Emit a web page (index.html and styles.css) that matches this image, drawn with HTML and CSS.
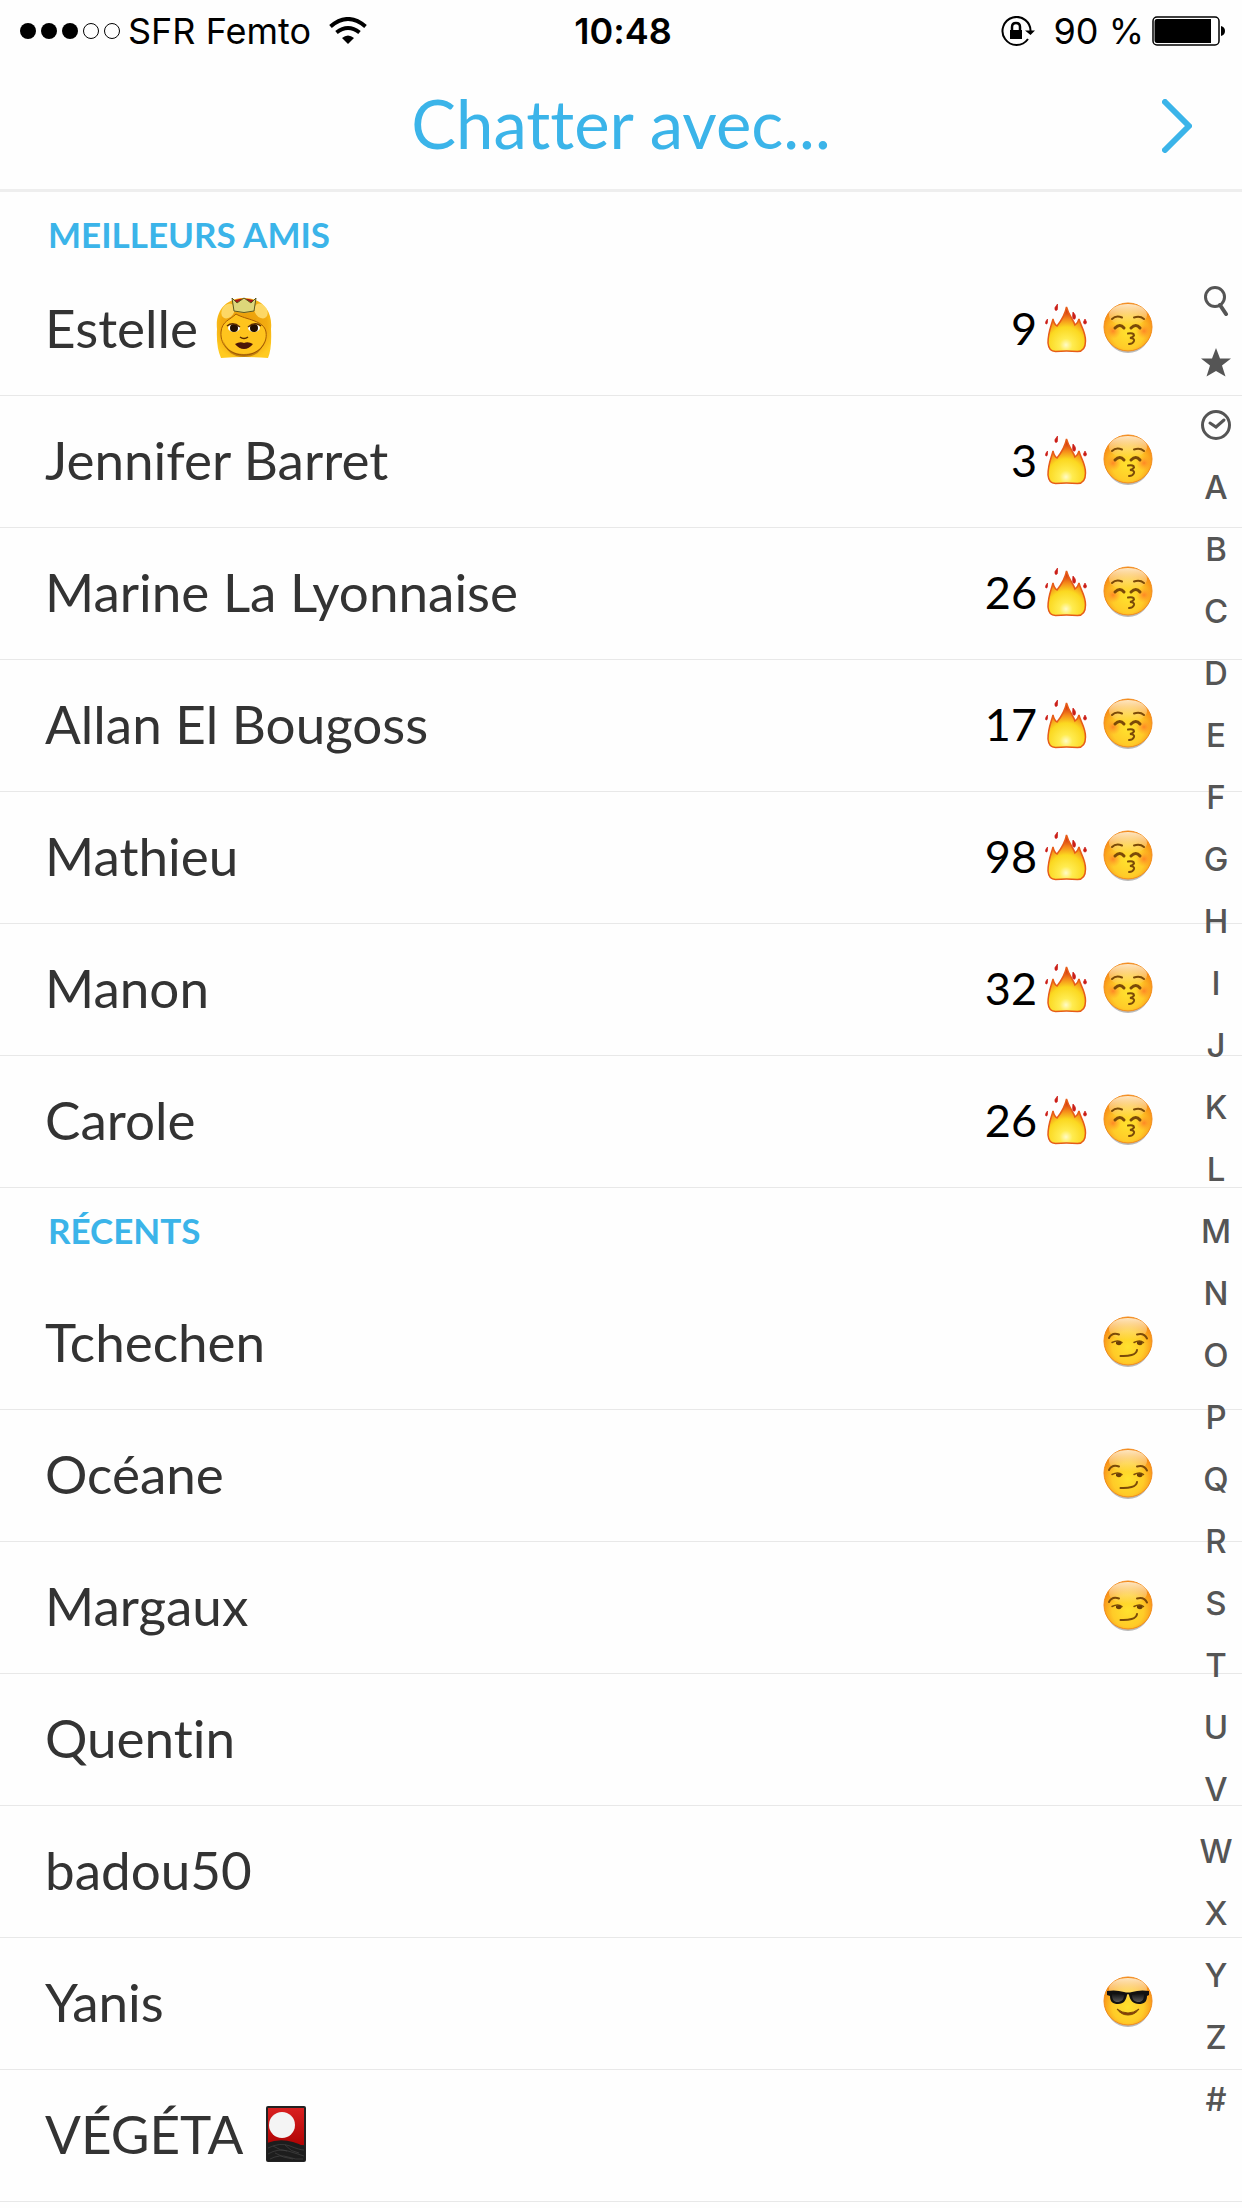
FILE: index.html
```html
<!DOCTYPE html>
<html lang="fr">
<head>
  <meta charset="UTF-8">
  <meta name="viewport" content="width=device-width">
  <title>Chatter avec…</title>
  <link rel="stylesheet" href="styles.css">
</head>
<body>
  <!-- shared emoji -->
  <svg class="defs" width="0" height="0" aria-hidden="true">
    <defs>
      <radialGradient id="face-fill" cx="50%" cy="62%" r="60%">
        <stop offset="0" stop-color="#ffe22e"/>
        <stop offset=".55" stop-color="#ffcb28"/>
        <stop offset="1" stop-color="#f78212"/>
      </radialGradient>
      <linearGradient id="face-shine" x1="0" y1="0" x2="0" y2="1">
        <stop offset="0" stop-color="#fff8e0" stop-opacity=".85"/>
        <stop offset="1" stop-color="#fff3c0" stop-opacity="0"/>
      </linearGradient>
      <radialGradient id="blush">
        <stop offset="0" stop-color="#ff7b25" stop-opacity=".85"/>
        <stop offset="1" stop-color="#ff9a25" stop-opacity="0"/>
      </radialGradient>
      <radialGradient id="flame-fill" gradientUnits="userSpaceOnUse" cx="21" cy="42" r="36">
        <stop offset="0" stop-color="#fffbc8"/>
        <stop offset=".18" stop-color="#ffec50"/>
        <stop offset=".5" stop-color="#fbd820"/>
        <stop offset=".72" stop-color="#f58a1a"/>
        <stop offset="1" stop-color="#cf240e"/>
      </radialGradient>
      <radialGradient id="hair-fill" cx="50%" cy="45%" r="60%">
        <stop offset="0" stop-color="#e79a08"/>
        <stop offset=".7" stop-color="#f3ac10"/>
        <stop offset="1" stop-color="#ffca20"/>
      </radialGradient>
      <linearGradient id="card-fill" x1="0" y1="0" x2="0" y2="1">
        <stop offset="0" stop-color="#d92020"/>
        <stop offset="1" stop-color="#b00404"/>
      </linearGradient>
      <linearGradient id="lens" x1="0" y1="0" x2="0" y2="1">
        <stop offset="0" stop-color="#111"/>
        <stop offset="1" stop-color="#5a5a5a"/>
      </linearGradient>

      <symbol id="face" viewBox="0 0 50 52">
        <ellipse cx="25" cy="27" rx="23" ry="24" fill="#777" opacity=".5"/>
        <circle cx="25" cy="25" r="24" fill="url(#face-fill)" stroke="#f28c1c"/>
        <ellipse cx="25" cy="13" rx="19" ry="11" fill="url(#face-shine)"/>
      </symbol>

      <symbol id="kiss" viewBox="0 0 50 52">
        <use href="#face"/>
        <circle cx="10" cy="29" r="8" fill="url(#blush)"/>
        <circle cx="41" cy="29" r="8" fill="url(#blush)"/>
        <g fill="none" stroke="#7b4a08" stroke-linecap="round" stroke-width="2">
          <path d="M9 17q4-4 10-1.500M31 15.500q6-2 10 1.500"/>
          <path d="M12 26q5-5 9 0M28 26q5-5 9 0" stroke-width="3"/>
          <path d="M25 31.500q6-1 6 2-1 2-4 2.500 5 .5 4 3-1 3-5 3"/>
        </g>
      </symbol>

      <symbol id="smirk" viewBox="0 0 50 52">
        <use href="#face"/>
        <g fill="none" stroke="#7b4a08" stroke-linecap="round" stroke-width="2">
          <path d="M6 22q3-6 10-3.500M34 18.500q7-2 10 4"/>
          <path d="M9 26.500q6-3 10 0M31 26.500q6-3 9.500 0" stroke-width="1.500"/>
          <path d="M17.500 40c8 .5 16-1 16.500-6" stroke-width="2"/>
        </g>
        <path d="M13 26q4-2 6 1-2 4-6 1zM34 26q4-2 6 1-2 4-6 1z" fill="#6b3f08"/>
      </symbol>

      <symbol id="cool" viewBox="0 0 50 52">
        <use href="#face"/>
        <path d="M14 33q11 8 22 0-4 6-11 6t-11-6z" fill="#8a3c08" stroke="#7b4a08" stroke-linejoin="round"/>
        <path d="M4 15q9-1.500 17 1 4 1 8 0 8-2.500 17-1v4l-2 1c0 6-3 8-8 8-6 0-9-4-10-9q-1-2-2 0c-1 5-3 9-9 9-5 0-8-2-8-8l-3-1z" fill="#111"/>
        <path d="M9 18q6-1 12 1c0 5-3 7-6.500 7S9 24 9 18zM29 19q6-2 12-1c0 6-2 8-5.500 8S29 24 29 19z" fill="url(#lens)"/>
      </symbol>

      <symbol id="fire" viewBox="0 0 42 50">
        <path d="M3 40C3 29 6 24 8 16q1 5 4 7C16 18 20 12 21.500 4 24 13 28 16 30 22q3-2 4-6c2 8 6.500 12 6.500 22 0 7-3 10.500-8 10.500q-11-1-22 0C6 48.500 3.500 46 3 40z" fill="url(#flame-fill)" stroke="#e65c18" stroke-width="1.500"/>
        <path d="M12.500 1v4.500q0 2-1.500 2t-1-3zM28 9q3 3 2.500 5.500t-2 1.500q-1.500-1-.5-7zM2.500 16v3.500q-.5 2-1.500 1.500T1 18zM40 16l1.500 3q0 2-1.500 2t-1.500-2z" fill="#cb1e17" stroke="#cb1e17" stroke-width=".7"/>
      </symbol>
    </defs>
  </svg>

  <div class="status-bar">
    <div class="status-left">
      <svg class="signal" viewBox="0 0 100 16" aria-hidden="true">
        <circle cx="8" cy="8" r="8"/><circle cx="29" cy="8" r="8"/><circle cx="50" cy="8" r="8"/>
        <g fill="none" stroke="#000"><circle cx="71" cy="8" r="7.500"/><circle cx="92" cy="8" r="7.500"/></g>
      </svg>
      <span>SFR Femto</span>
      <svg class="wifi" viewBox="0 0 38 28" aria-hidden="true">
        <path d="M19 27l-6-6q6-5 12 0z"/>
        <g fill="none" stroke="#000" stroke-width="4"><path d="M1.500 9.500q17.500-15 35 0"/><path d="M7.500 15.500q11.500-9 23 0"/></g>
      </svg>
    </div>
    <div class="clock">10:48</div>
    <div class="status-right">
      <svg class="lock" viewBox="0 0 34 30" aria-hidden="true">
        <g fill="none" stroke="#000" stroke-width="2">
          <path d="M29.500 16A14 14 0 1 0 27 23"/>
          <path d="M11 15v-4q0-4 4-4t4 4v4" stroke-width="2.500"/>
        </g>
        <path d="M9 14h12v9H9zM24 14.500h10L29.500 19z"/>
      </svg>
      <span>90 %</span>
      <svg class="battery" viewBox="0 0 74 30" aria-hidden="true">
        <rect x="1" y="1" width="66" height="28" rx="4" fill="none" stroke="#000" stroke-width="1.500"/>
        <path d="M5 3h54v24H5q-2.500 0-2.500-3V6Q2.500 3 5 3zM69 10q4 1 4 5t-4 5z"/>
      </svg>
    </div>
  </div>

  <header>
    <h1>Chatter avec...</h1>
    <button class="next-button" type="button" aria-label="Suivant">
      <svg viewBox="0 0 30 54"><path d="M3 3l24 24L3 51" fill="none" stroke="#3bb4e9" stroke-width="6" stroke-linecap="round" stroke-linejoin="round"/></svg>
    </button>
  </header>

  <main>
    <section class="friends best">
      <h2>MEILLEURS AMIS</h2>
      <ul>
        <li>
          <span class="name">Estelle
            <svg class="princess" viewBox="0 0 56 61" aria-hidden="true">
              <path d="M1 32C-1 13 11 1 28 1s29 12 27 31q1 20-3 29-24-2-47 0Q0 50 1 32z" fill="url(#hair-fill)"/>
              <ellipse cx="12" cy="14" rx="6" ry="8" transform="rotate(35 12 14)" fill="#ffe27a" opacity=".8"/>
              <ellipse cx="45" cy="14" rx="6" ry="8" transform="rotate(-35 45 14)" fill="#ffe27a" opacity=".8"/>
              <path d="M5 35C6 24 14 23 20 17c10 6 28 6 30 18 2 13-9 23-22 23S4 49 5 35z" fill="#ffc41d" stroke="#a85d04"/>
              <path d="M7 43q5 14 21 14t21-14q-4 17-21 17T7 43z" fill="#8d4a04" opacity=".5"/>
              <ellipse cx="18" cy="31" rx="6" ry="4" fill="#fff"/><ellipse cx="38" cy="31" rx="6" ry="4" fill="#fff"/>
              <circle cx="18" cy="31" r="4" fill="#251000"/><circle cx="38" cy="31" r="4" fill="#251000"/>
              <path d="M11 29q6-5 13 1M32 30q7-6 13-1M24 40q4 3 8 0" fill="none" stroke="#5b2b00" stroke-width="1.500"/>
              <path d="M19 47q5-3 9-1 4-2 9 1-4 5-9 5t-9-5z" fill="#4a1508"/>
              <path d="M19 3q9-3 18 0v6H19z" fill="#a81717"/>
              <path d="M16 1l5 5 7-5 7 5 5-5-2 13q-10 3-20 0z" fill="#ddd77a" stroke="#5d5820"/>
            </svg>
          </span>
          <span class="score">9<svg class="fire"><use href="#fire"/></svg><svg class="face"><use href="#kiss"/></svg></span>
        </li>
        <li><span class="name">Jennifer Barret</span><span class="score">3<svg class="fire"><use href="#fire"/></svg><svg class="face"><use href="#kiss"/></svg></span></li>
        <li><span class="name">Marine La Lyonnaise</span><span class="score">26<svg class="fire"><use href="#fire"/></svg><svg class="face"><use href="#kiss"/></svg></span></li>
        <li><span class="name">Allan El Bougoss</span><span class="score">17<svg class="fire"><use href="#fire"/></svg><svg class="face"><use href="#kiss"/></svg></span></li>
        <li><span class="name">Mathieu</span><span class="score">98<svg class="fire"><use href="#fire"/></svg><svg class="face"><use href="#kiss"/></svg></span></li>
        <li><span class="name">Manon</span><span class="score">32<svg class="fire"><use href="#fire"/></svg><svg class="face"><use href="#kiss"/></svg></span></li>
        <li><span class="name">Carole</span><span class="score">26<svg class="fire"><use href="#fire"/></svg><svg class="face"><use href="#kiss"/></svg></span></li>
      </ul>
    </section>

    <section class="friends">
      <h2>RÉCENTS</h2>
      <ul>
        <li><span class="name">Tchechen</span><span class="score"><svg class="face"><use href="#smirk"/></svg></span></li>
        <li><span class="name">Océane</span><span class="score"><svg class="face"><use href="#smirk"/></svg></span></li>
        <li><span class="name">Margaux</span><span class="score"><svg class="face"><use href="#smirk"/></svg></span></li>
        <li><span class="name">Quentin</span></li>
        <li><span class="name">badou50</span></li>
        <li><span class="name">Yanis</span><span class="score"><svg class="face"><use href="#cool"/></svg></span></li>
        <li>
          <span class="name">VÉGÉTA
            <svg class="card" viewBox="0 0 50 58" aria-hidden="true">
              <g transform="translate(4 0)">
                <rect x="1" y="1" width="40" height="56" rx="2" fill="#222"/>
                <path d="M3 3h36v37H3z" fill="url(#card-fill)"/>
                <circle cx="17" cy="20" r="13" fill="#f4f4f4"/>
                <path d="M2 38q18-7 38 4v14H2z" fill="#1d1d1d"/>
                <path d="M3 43q12-6 22-2t14 4M3 49q10-6 20-3t16 5M5 54q10-5 18-2t15 2M8 41q8 5 14 5M20 40q6 7 14 8M10 48q8 5 18 6" fill="none" stroke="#444" stroke-width=".7"/>
              </g>
            </svg>
          </span>
        </li>
      </ul>
    </section>

    <!-- quick index, sits over the list -->
    <nav class="index" aria-label="Index">
      <a href="#" aria-label="Rechercher"><svg viewBox="0 0 30 30"><circle cx="14" cy="11" r="9.500" fill="none" stroke="#555" stroke-width="3"/><path d="M19 19l6 9" stroke="#555" stroke-width="4" stroke-linecap="round"/></svg></a>
      <a href="#" aria-label="Meilleurs amis"><svg viewBox="0 0 30 30"><path d="M15 0l4 10.500h11l-9 7 3.500 11L15 23l-9.500 5.500 3.500-11-9-7h11z" fill="#555"/></svg></a>
      <a href="#" aria-label="Récents"><svg viewBox="0 0 30 30"><g fill="none" stroke="#555" stroke-width="3"><circle cx="15" cy="15" r="13.500"/><path d="M9 13l6 4 8-7" stroke-linecap="round"/></g></svg></a>
      <a href="#">A</a>
      <a href="#">B</a>
      <a href="#">C</a>
      <a href="#">D</a>
      <a href="#">E</a>
      <a href="#">F</a>
      <a href="#">G</a>
      <a href="#">H</a>
      <a href="#">I</a>
      <a href="#">J</a>
      <a href="#">K</a>
      <a href="#">L</a>
      <a href="#">M</a>
      <a href="#">N</a>
      <a href="#">O</a>
      <a href="#">P</a>
      <a href="#">Q</a>
      <a href="#">R</a>
      <a href="#">S</a>
      <a href="#">T</a>
      <a href="#">U</a>
      <a href="#">V</a>
      <a href="#">W</a>
      <a href="#">X</a>
      <a href="#">Y</a>
      <a href="#">Z</a>
      <a href="#">#</a>
    </nav>
  </main>
</body>
</html>
```

FILE: styles.css
```css
* {
  box-sizing: border-box;
}

body {
  margin: 0;
  font-family: Lato, "Open Sans", sans-serif;
  font-variant-ligatures: none;
  background-color: #fefefe;
  color: #333;
}

svg {
  display: block;
  flex-shrink: 0;
}

.defs {
  position: absolute;
}

.status-bar {
  display: grid;
  grid-template-columns: 1fr auto 1fr;
  align-items: center;
  height: 62px;
  padding: 0 16px 0 20px;
  font-family: Inter, sans-serif;
  font-size: 36px;
  color: #000;
}

.status-left,
.status-right {
  display: flex;
  align-items: center;
}

.status-right {
  justify-content: flex-end;
}

.clock {
  font-weight: 600;
}

.signal {
  width: 100px;
  height: 16px;
  margin-right: 8px;
}

.wifi {
  width: 38px;
  height: 28px;
  margin-left: 18px;
}

.lock {
  width: 34px;
  height: 30px;
  margin-right: 18px;
}

.battery {
  width: 74px;
  height: 30px;
  margin-left: 8px;
}

header {
  display: grid;
  grid-template-columns: 1fr auto 1fr;
  align-items: center;
  height: 130px;
  padding: 0 50px;
  border-bottom: 3px solid #eee;
}

h1 {
  grid-column: 2;
  margin: 0;
  padding-bottom: 6px;
  font-size: 67px;
  font-weight: 400;
  color: #3bb4e9;
}

.next-button {
  justify-self: end;
  padding: 0;
  border: none;
  background: none;
  cursor: pointer;
}

.next-button svg {
  width: 30px;
  height: 54px;
}

main {
  position: relative;
}

h2 {
  height: 90px;
  margin: 0;
  padding: 0 48px;
  font-size: 35px;
  line-height: 84px;
  font-weight: 700;
  color: #3bb4e9;
}

.best h2 {
  height: 72px;
}

ul {
  margin: 0;
  padding: 0;
  list-style: none;
}

li {
  display: flex;
  align-items: center;
  justify-content: space-between;
  height: 132px;
  padding: 0 89px 4px 45px;
  border-bottom: 1px solid #e8e8e8;
}

.name {
  display: flex;
  align-items: center;
  gap: 18px;
  font-size: 53px;
}

.score {
  display: flex;
  align-items: center;
  font-size: 45px;
  color: #000;
}

.fire {
  width: 42px;
  height: 50px;
  margin: 0 16px 0 8px;
}

.face {
  width: 50px;
  height: 52px;
}

.princess {
  width: 56px;
  height: 61px;
}

.card {
  width: 50px;
  height: 58px;
}

.index {
  position: absolute;
  top: 78px;
  right: 0;
  width: 52px;
}

.index a {
  display: flex;
  align-items: center;
  justify-content: center;
  height: 62px;
  font-family: Inter, sans-serif;
  font-size: 33px;
  font-weight: 500;
  color: #555;
  text-decoration: none;
}

.index svg {
  width: 30px;
  height: 30px;
}
```
